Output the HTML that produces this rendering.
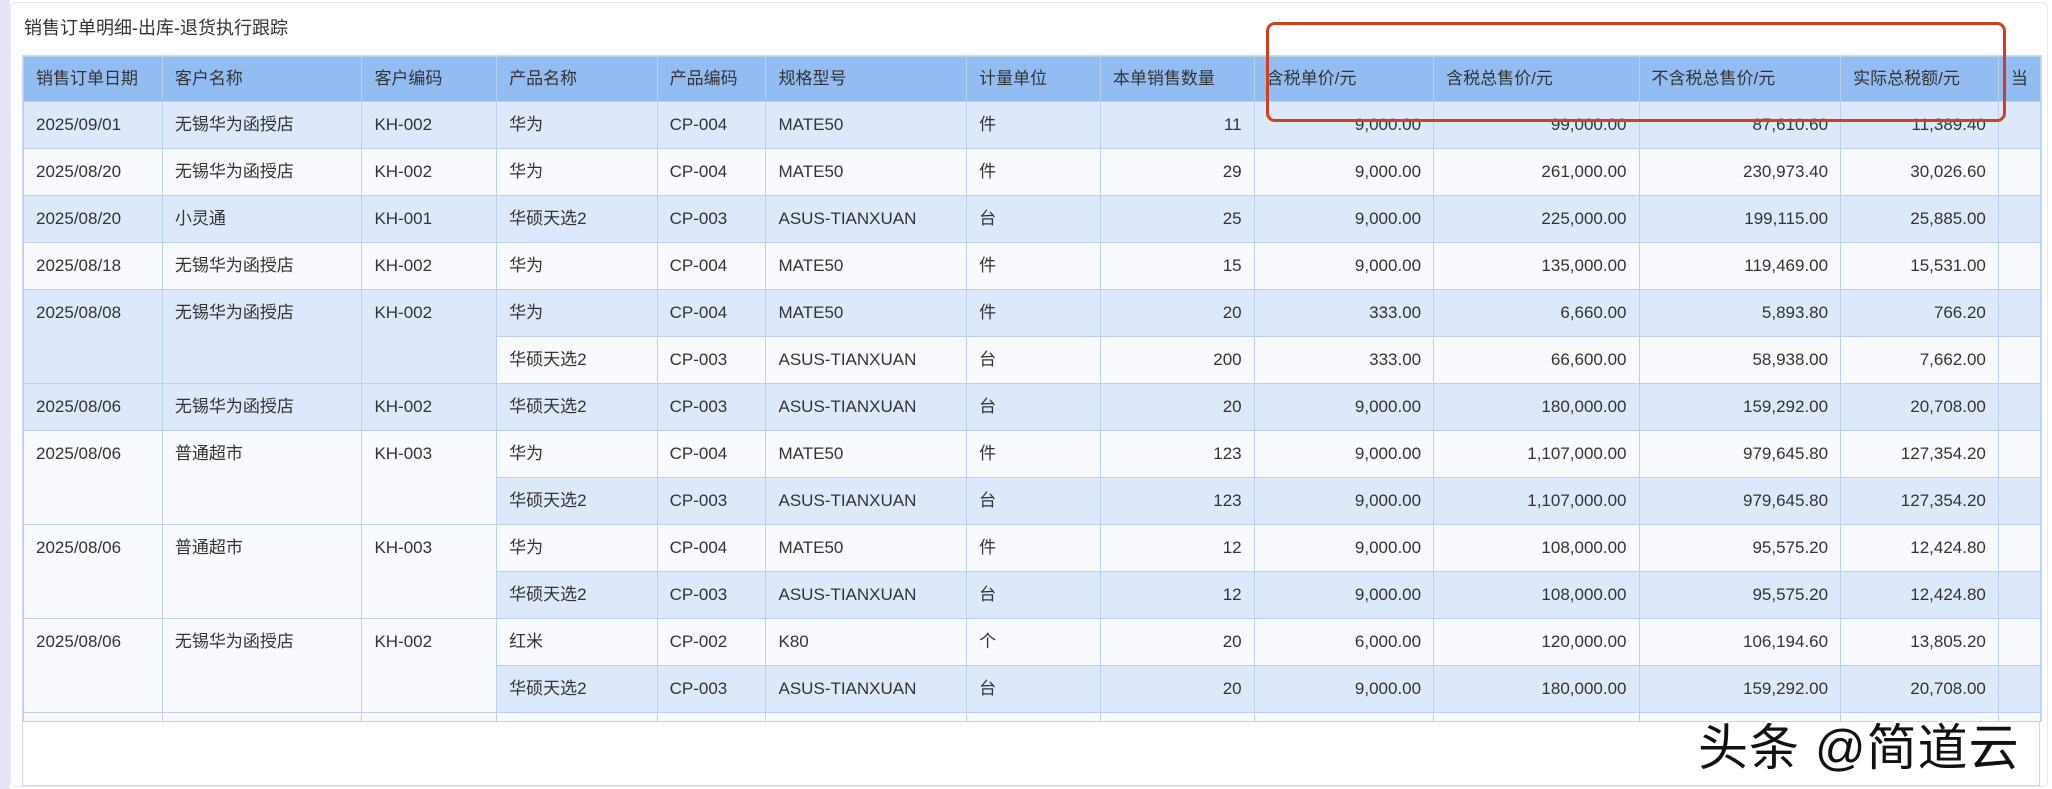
<!DOCTYPE html>
<html><head><meta charset="utf-8"><style>
body{margin:0;width:2052px;height:789px;background:#fff;overflow:hidden;font-family:"Liberation Sans","Noto Sans CJK SC",sans-serif;position:relative}
.strip{position:absolute;left:0;top:0;width:10px;height:789px;background:#e6e4f7}
.card{position:absolute;left:10px;top:2px;width:2036px;height:783px;background:#fff;border:1px solid #e4e8f0;border-radius:6px}
.title{position:absolute;left:24px;top:14px;font-size:18px;color:#333}
.wrap{position:absolute;left:22px;top:55px;width:2018px;height:666px;border:1px solid #c8daf0;border-bottom:none;overflow:hidden}
table{border-collapse:collapse;table-layout:fixed;font-size:17px;color:#333}
td,th{border:1px solid #b9d0ee;padding:0 12px;white-space:nowrap;overflow:hidden;text-align:left;font-weight:normal;line-height:20px;vertical-align:middle}
th{background:#93bcf2;height:44px;color:#333}
tr.r td{height:46px}
.b td{background:#dde9fa}
.w td{background:#f8fafd}
td.n{text-align:right}
td.m{vertical-align:top;padding-top:13px}
.foot{position:absolute;left:22px;top:721px;width:2016px;height:63px;border:1px solid #c8daf0;border-top:1px solid #b9d0ee}
.red{position:absolute;left:1266px;top:22px;width:734px;height:94px;border:3px solid #d0401f;border-radius:9px}
.wm{position:absolute;left:1698px;top:708px;font-size:50px;color:#111;letter-spacing:1px;text-shadow:0 0 3px #fff,2px 2px 0 #fff,-2px -2px 0 #fff}
</style></head><body>
<div class="strip"></div>
<div class="card"></div>
<div class="title">销售订单明细-出库-退货执行跟踪</div>
<div class="wrap">
<table>
<colgroup><col style="width:139px"><col style="width:200px"><col style="width:135px"><col style="width:161px"><col style="width:109px"><col style="width:201px"><col style="width:134px"><col style="width:154px"><col style="width:180px"><col style="width:206px"><col style="width:202px"><col style="width:158px"><col style="width:38px"></colgroup>
<tr><th>销售订单日期</th><th>客户名称</th><th>客户编码</th><th>产品名称</th><th>产品编码</th><th>规格型号</th><th>计量单位</th><th>本单销售数量</th><th>含税单价/元</th><th>含税总售价/元</th><th>不含税总售价/元</th><th>实际总税额/元</th><th>当</th></tr>
<tr class="r b"><td>2025/09/01</td><td>无锡华为函授店</td><td>KH-002</td><td>华为</td><td>CP-004</td><td>MATE50</td><td>件</td><td class="n">11</td><td class="n">9,000.00</td><td class="n">99,000.00</td><td class="n">87,610.60</td><td class="n">11,389.40</td><td></td></tr>
<tr class="r w"><td>2025/08/20</td><td>无锡华为函授店</td><td>KH-002</td><td>华为</td><td>CP-004</td><td>MATE50</td><td>件</td><td class="n">29</td><td class="n">9,000.00</td><td class="n">261,000.00</td><td class="n">230,973.40</td><td class="n">30,026.60</td><td></td></tr>
<tr class="r b"><td>2025/08/20</td><td>小灵通</td><td>KH-001</td><td>华硕天选2</td><td>CP-003</td><td>ASUS-TIANXUAN</td><td>台</td><td class="n">25</td><td class="n">9,000.00</td><td class="n">225,000.00</td><td class="n">199,115.00</td><td class="n">25,885.00</td><td></td></tr>
<tr class="r w"><td>2025/08/18</td><td>无锡华为函授店</td><td>KH-002</td><td>华为</td><td>CP-004</td><td>MATE50</td><td>件</td><td class="n">15</td><td class="n">9,000.00</td><td class="n">135,000.00</td><td class="n">119,469.00</td><td class="n">15,531.00</td><td></td></tr>
<tr class="r b"><td class="m" rowspan="2">2025/08/08</td><td class="m" rowspan="2">无锡华为函授店</td><td class="m" rowspan="2">KH-002</td><td>华为</td><td>CP-004</td><td>MATE50</td><td>件</td><td class="n">20</td><td class="n">333.00</td><td class="n">6,660.00</td><td class="n">5,893.80</td><td class="n">766.20</td><td></td></tr>
<tr class="r w"><td>华硕天选2</td><td>CP-003</td><td>ASUS-TIANXUAN</td><td>台</td><td class="n">200</td><td class="n">333.00</td><td class="n">66,600.00</td><td class="n">58,938.00</td><td class="n">7,662.00</td><td></td></tr>
<tr class="r b"><td>2025/08/06</td><td>无锡华为函授店</td><td>KH-002</td><td>华硕天选2</td><td>CP-003</td><td>ASUS-TIANXUAN</td><td>台</td><td class="n">20</td><td class="n">9,000.00</td><td class="n">180,000.00</td><td class="n">159,292.00</td><td class="n">20,708.00</td><td></td></tr>
<tr class="r w"><td class="m" rowspan="2">2025/08/06</td><td class="m" rowspan="2">普通超市</td><td class="m" rowspan="2">KH-003</td><td>华为</td><td>CP-004</td><td>MATE50</td><td>件</td><td class="n">123</td><td class="n">9,000.00</td><td class="n">1,107,000.00</td><td class="n">979,645.80</td><td class="n">127,354.20</td><td></td></tr>
<tr class="r b"><td>华硕天选2</td><td>CP-003</td><td>ASUS-TIANXUAN</td><td>台</td><td class="n">123</td><td class="n">9,000.00</td><td class="n">1,107,000.00</td><td class="n">979,645.80</td><td class="n">127,354.20</td><td></td></tr>
<tr class="r w"><td class="m" rowspan="2">2025/08/06</td><td class="m" rowspan="2">普通超市</td><td class="m" rowspan="2">KH-003</td><td>华为</td><td>CP-004</td><td>MATE50</td><td>件</td><td class="n">12</td><td class="n">9,000.00</td><td class="n">108,000.00</td><td class="n">95,575.20</td><td class="n">12,424.80</td><td></td></tr>
<tr class="r b"><td>华硕天选2</td><td>CP-003</td><td>ASUS-TIANXUAN</td><td>台</td><td class="n">12</td><td class="n">9,000.00</td><td class="n">108,000.00</td><td class="n">95,575.20</td><td class="n">12,424.80</td><td></td></tr>
<tr class="r w"><td class="m" rowspan="2">2025/08/06</td><td class="m" rowspan="2">无锡华为函授店</td><td class="m" rowspan="2">KH-002</td><td>红米</td><td>CP-002</td><td>K80</td><td>个</td><td class="n">20</td><td class="n">6,000.00</td><td class="n">120,000.00</td><td class="n">106,194.60</td><td class="n">13,805.20</td><td></td></tr>
<tr class="r b"><td>华硕天选2</td><td>CP-003</td><td>ASUS-TIANXUAN</td><td>台</td><td class="n">20</td><td class="n">9,000.00</td><td class="n">180,000.00</td><td class="n">159,292.00</td><td class="n">20,708.00</td><td></td></tr>
<tr class="r w"><td></td><td></td><td></td><td></td><td></td><td></td><td></td><td></td><td></td><td></td><td></td><td></td><td></td></tr>
</table>
</div>
<div class="foot"></div>
<div class="red"></div>
<div class="wm">头条 @简道云</div>
</body></html>
